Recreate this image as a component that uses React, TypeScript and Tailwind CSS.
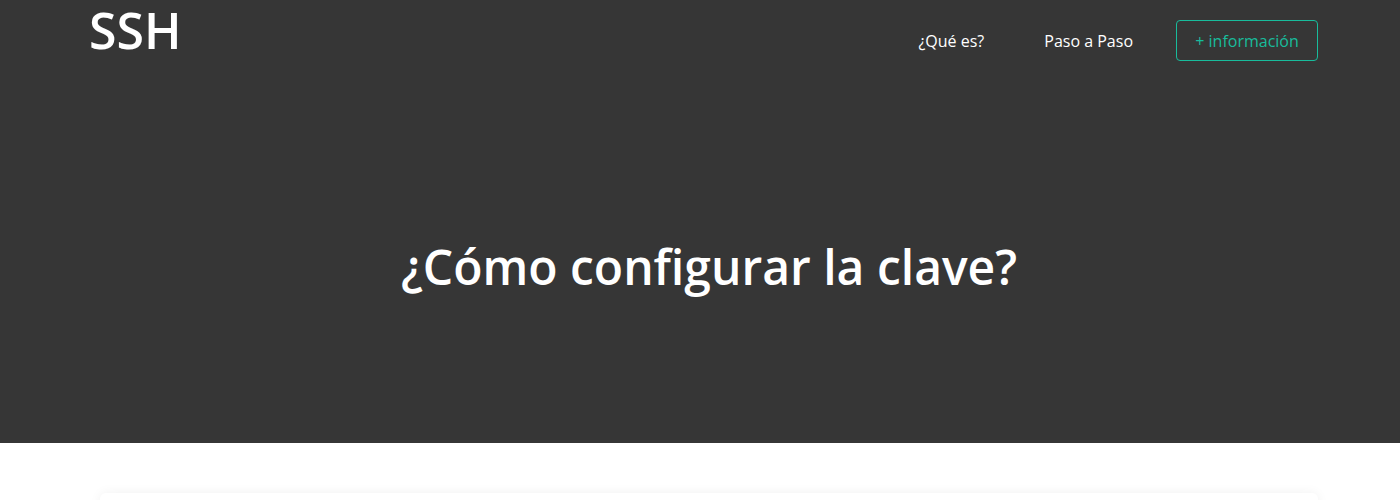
export default function App() {
  return (
    <div className="min-h-[500px] bg-white" style={{ fontFamily: '"Open Sans", "Noto Sans", sans-serif' }}>
      <div className="h-[443px] bg-[#363636] flex flex-col">
        <nav className="flex items-start justify-between pl-[89px] pr-[82px] h-[82px]">
          <div className="text-[50px] leading-[60px] font-semibold text-white">SSH</div>
          <div className="flex items-center mt-[20px]">
            <a className="text-[16px] text-white mr-[60px]">¿Qué es?</a>
            <a className="text-[16px] text-white mr-[43px]">Paso a Paso</a>
            <button className="h-[41px] w-[142px] border border-[#18bc9c] rounded-[4px] text-[#18bc9c] text-[16px] flex items-center justify-center">
              + información
            </button>
          </div>
        </nav>
        <h1 className="mt-[156px] pl-[100px] pr-[82px] text-center text-white text-[48px] leading-[57.6px] font-semibold">
          ¿Cómo configurar la clave?
        </h1>
      </div>
      <div className="pt-[50px] pl-[100px] pr-[82px]">
        <div className="h-[200px] bg-white rounded-[6px] shadow-[0_0_12px_rgba(0,0,0,0.06)]"></div>
      </div>
    </div>
  );
}
